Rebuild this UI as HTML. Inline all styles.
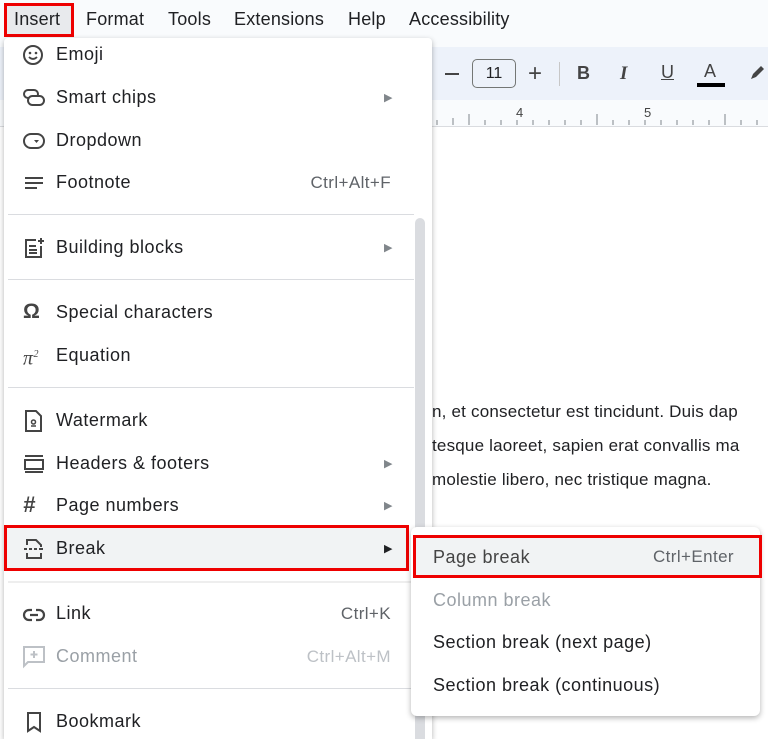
<!DOCTYPE html>
<html style="width:768px;height:739px;overflow:hidden"><head><style>
html,body{margin:0;width:768px;height:739px;overflow:hidden}
body{background:#fff;font-family:"Liberation Sans",Arial,sans-serif;position:relative;color:#202124}
.a{position:absolute}
.mb{font-size:18px;top:9px;color:#202124;letter-spacing:.2px}
.menu{left:4px;top:38px;width:428px;height:701px;background:#fff;box-shadow:0 2px 6px rgba(0,0,0,.3);border-radius:4px 4px 0 0;overflow:hidden}
.it{position:absolute;left:52px;font-size:18px;line-height:20px;letter-spacing:.5px}
.sc{position:absolute;right:41px;font-size:17px;color:#5f6368;letter-spacing:.4px}
.ar{position:absolute;left:380px;font-size:11px;color:#80868b}
.sep{position:absolute;left:4px;width:406px;height:1px;background:#dadce0}
.ic{position:absolute;left:18px}
.dt{font-size:17px;color:#202124;left:432px;letter-spacing:.2px}
</style></head><body>
<div class="a" style="left:0;top:0;width:768px;height:47px;background:#f9fbfd"></div>
<div class="a" style="left:4px;top:3px;width:70px;height:34px;border:3px solid #e00;background:#e8eaed;box-sizing:border-box"></div>
<div class="a mb" style="left:14px">Insert</div>
<div class="a mb" style="left:86px">Format</div>
<div class="a mb" style="left:168px">Tools</div>
<div class="a mb" style="left:234px">Extensions</div>
<div class="a mb" style="left:348px">Help</div>
<div class="a mb" style="left:409px">Accessibility</div>
<div class="a" style="left:0;top:47px;width:768px;height:53px;background:#edf2fa"></div>
<div class="a" style="left:445px;top:73px;width:14px;height:2px;background:#444"></div>
<div class="a" style="left:472px;top:59px;width:44px;height:29px;border:1px solid #747775;border-radius:5px;box-sizing:border-box;font-size:16px;text-align:center;line-height:27px">11</div>
<div class="a" style="left:528px;top:60px;font-size:24px;color:#444">+</div>
<div class="a" style="left:559px;top:62px;width:1px;height:24px;background:#c7c7c7"></div>
<div class="a" style="left:577px;top:63px;font-size:18px;font-weight:bold;color:#444">B</div>
<div class="a" style="left:620px;top:63px;font-size:19px;font-style:italic;font-family:'Liberation Serif';font-weight:bold;color:#444">I</div>
<div class="a" style="left:661px;top:62px;font-size:18px;text-decoration:underline;color:#444">U</div>
<div class="a" style="left:704px;top:61px;font-size:18px;color:#444">A</div>
<div class="a" style="left:697px;top:83px;width:28px;height:4px;background:#000"></div>
<svg class="a" style="left:748px;top:62px" width="20" height="20"><path d="M3 17l2-5 8-8 3 3-8 8z" fill="#444"/></svg>
<div class="a" style="left:0;top:100px;width:768px;height:26px;background:#f9fbfd;border-bottom:1px solid #dadce0"></div>
<svg class="a" style="left:430px;top:100px" width="338" height="26">
<g stroke="#80868b" stroke-width="1">
<path d="M7 20v5M23 18v7M39 20v5M55 20v5M71 20v5M87 20v5M103 20v5M119 20v5M135 20v5M151 20v5M167 20v5M183 20v5M199 20v5M215 20v5M231 20v5M247 20v5M263 20v5M279 20v5M295 20v5M311 20v5M327 20v5M39 14v11M167 14v11M295 14v11"/></g>
<text x="86" y="17" font-size="13" fill="#444" font-family="Liberation Sans">4</text>
<text x="214" y="17" font-size="13" fill="#444" font-family="Liberation Sans">5</text>
</svg>
<div class="a dt" style="top:402px">n, et consectetur est tincidunt. Duis dap</div>
<div class="a dt" style="top:436px">tesque laoreet, sapien erat convallis ma</div>
<div class="a dt" style="top:470px">molestie libero, nec tristique magna.</div>
<div class="a menu">
<div class="a" style="left:411px;top:180px;width:10px;height:540px;background:#dadce0;border-radius:5px"></div>
<svg class="ic" style="top:6px" width="22" height="22"><circle cx="11" cy="11" r="9" fill="none" stroke="#444" stroke-width="2"/><circle cx="8" cy="9" r="1.3" fill="#444"/><circle cx="14" cy="9" r="1.3" fill="#444"/><path d="M7 13q4 4 8 0" fill="none" stroke="#444" stroke-width="1.8"/></svg>
<div class="it" style="top:6px">Emoji</div>
<svg class="ic" style="top:49px" width="24" height="22"><rect x="2" y="3" width="14" height="8" rx="4" fill="none" stroke="#444" stroke-width="2"/><rect x="6" y="9" width="16" height="9" rx="4.5" fill="#fff" stroke="#444" stroke-width="2"/></svg>
<div class="it" style="top:49px">Smart chips</div><div class="ar" style="top:53px">▶</div>
<svg class="ic" style="top:92px" width="24" height="22"><rect x="2" y="4" width="20" height="14" rx="7" fill="none" stroke="#444" stroke-width="2"/><path d="M12 10h5l-2.5 3z" fill="#444"/></svg>
<div class="it" style="top:92px">Dropdown</div>
<svg class="ic" style="top:134px" width="24" height="22"><path d="M3 6h18M3 11h18M3 16h12" stroke="#444" stroke-width="2"/></svg>
<div class="it" style="top:134px">Footnote</div><div class="sc" style="top:135px">Ctrl+Alt+F</div>
<div class="sep" style="top:176px"></div>
<svg class="ic" style="top:199px" width="24" height="22"><path d="M14 3H4v17h15V9" fill="none" stroke="#444" stroke-width="2"/><path d="M7 9h7M7 13h8M7 16h8M19 1v6M16 4h6" stroke="#444" stroke-width="2"/></svg>
<div class="it" style="top:199px">Building blocks</div><div class="ar" style="top:203px">▶</div>
<div class="sep" style="top:241px"></div>
<div class="it" style="top:264px;left:19px;font-size:21px;font-weight:bold;color:#444">Ω</div>
<div class="it" style="top:264px">Special characters</div>
<div class="it" style="top:307px;left:19px;font-size:20px;font-family:'Liberation Serif';font-style:italic;color:#444">π<sup style="font-size:10px">2</sup></div>
<div class="it" style="top:307px">Equation</div>
<div class="sep" style="top:349px"></div>
<svg class="ic" style="top:371px" width="24" height="24"><path d="M4 2h10l5 5v15H4z" fill="none" stroke="#444" stroke-width="2"/><circle cx="11.5" cy="13" r="2" fill="none" stroke="#444" stroke-width="1.5"/><path d="M9 17h5" stroke="#444" stroke-width="1.5"/></svg>
<div class="it" style="top:372px">Watermark</div>
<svg class="ic" style="top:415px" width="24" height="22"><path d="M3 3h18M3 19h18" stroke="#444" stroke-width="2"/><rect x="3" y="7" width="18" height="9" fill="none" stroke="#444" stroke-width="2"/></svg>
<div class="it" style="top:415px">Headers &amp; footers</div><div class="ar" style="top:419px">▶</div>
<div class="it" style="top:457px;left:19px;font-size:22px;font-weight:bold;font-style:italic;color:#444">#</div>
<div class="it" style="top:457px">Page numbers</div><div class="ar" style="top:461px">▶</div>
<div class="a" style="left:0;top:487px;width:405px;height:46px;border:3px solid #e00;background:#f1f3f4;box-sizing:border-box"></div>
<svg class="ic" style="top:499px" width="24" height="24"><path d="M5 8V3h9l5 5v2M5 16v5h14v-5" fill="none" stroke="#444" stroke-width="2"/><path d="M2 12h3M7 12h3M12 12h3M17 12h4" stroke="#444" stroke-width="2"/></svg>
<div class="it" style="top:500px">Break</div><div class="ar" style="top:504px;color:#202124">▶</div>
<div class="sep" style="top:543px;height:2px;background:#eee"></div>
<svg class="ic" style="top:566px" width="24" height="22"><path d="M10 6H7a5 5 0 000 10h3M14 6h3a5 5 0 010 10h-3M8 11h8" fill="none" stroke="#444" stroke-width="2.2"/></svg>
<div class="it" style="top:565px">Link</div><div class="sc" style="top:566px">Ctrl+K</div>
<svg class="ic" style="top:607px" width="24" height="24"><path d="M2 2h20v15H6l-4 4z" fill="none" stroke="#bdc1c6" stroke-width="2"/><path d="M12 6v7M8.5 9.5h7" stroke="#bdc1c6" stroke-width="2"/></svg>
<div class="it" style="top:608px;color:#9aa0a6">Comment</div><div class="sc" style="top:609px;color:#bdc1c6">Ctrl+Alt+M</div>
<div class="sep" style="top:650px"></div>
<svg class="ic" style="top:672px" width="24" height="24"><path d="M6 3h12v18l-6-4-6 4z" fill="none" stroke="#444" stroke-width="2"/></svg>
<div class="it" style="top:673px">Bookmark</div>
</div>
<div class="a" style="left:411px;top:527px;width:349px;height:189px;background:#fff;box-shadow:0 2px 6px rgba(0,0,0,.3);border-radius:6px"></div>
<div class="a" style="left:413px;top:535px;width:349px;height:43px;border:3px solid #e00;background:#f1f3f4;box-sizing:border-box"></div>
<div class="a" style="left:433px;top:547px;font-size:18px;color:#444;letter-spacing:.5px">Page break</div>
<div class="a" style="left:653px;top:547px;font-size:17px;color:#5f6368;letter-spacing:.4px">Ctrl+Enter</div>
<div class="a" style="left:433px;top:590px;font-size:18px;color:#9aa0a6;letter-spacing:.5px">Column break</div>
<div class="a" style="left:433px;top:632px;font-size:18px;letter-spacing:.5px">Section break (next page)</div>
<div class="a" style="left:433px;top:675px;font-size:18px;letter-spacing:.5px">Section break (continuous)</div>
</body></html>
